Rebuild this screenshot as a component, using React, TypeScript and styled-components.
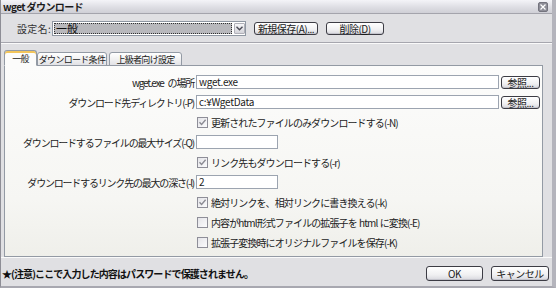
import React from "react";
import styled, { createGlobalStyle } from "styled-components";

const GlobalStyle = createGlobalStyle`
  body {
    margin: 0;
    background: #e0e0e3;
  }
  * {
    box-sizing: border-box;
  }
`;

const uiFont = `"Noto Sans CJK JP", "Noto Sans", sans-serif`;

const App: React.FC<{}> = () => {
  const checkRows = [
    { label: "絶対リンクを、相対リンクに書き換える(-k)", checked: true },
    { label: "内容がhtml形式ファイルの拡張子を html に変換(-E)", checked: false },
    { label: "拡張子変換時にオリジナルファイルを保存(-K)", checked: false },
  ];

  return (
    <>
      <GlobalStyle />
      <Window>
        <TitleBar>
          <TitleText>wget ダウンロード</TitleText>
          <CloseButton>
            <svg width="6" height="6" viewBox="0 0 6 6">
              <path d="M0.5 0.5 L5.5 5.5 M5.5 0.5 L0.5 5.5" stroke="#fff" strokeWidth="1.2" />
            </svg>
          </CloseButton>
        </TitleBar>

        <Toolbar>
          <ComboLabel>設定名:</ComboLabel>
          <Combo>
            <ComboValue>一般</ComboValue>
            <ComboArrow>
              <svg width="7" height="5" viewBox="0 0 7 5">
                <path d="M0.5 0.8 L3.5 3.8 L6.5 0.8" stroke="#4a4a55" strokeWidth="1.4" fill="none" />
              </svg>
            </ComboArrow>
          </Combo>
          <Button $width={64}>新規保存(<u>A</u>)...</Button>
          <Button $width={58}>削除(<u>D</u>)</Button>
        </Toolbar>

        <Separator />

        <TabArea>
          <TabStrip>
            <Tab $active $width={33}>一般</Tab>
            <Tab $width={70}>ダウンロード条件</Tab>
            <Tab $width={73}>上級者向け設定</Tab>
          </TabStrip>
          <Panel>
            <FieldLabel>wget.exe の場所</FieldLabel>
            <FieldWithButton>
              <TextBox>wget.exe</TextBox>
              <Button $width={39}>参照...</Button>
            </FieldWithButton>

            <FieldLabel>ダウンロード先ディレクトリ(-P)</FieldLabel>
            <FieldWithButton>
              <TextBox>c:¥WgetData</TextBox>
              <Button $width={39}>参照...</Button>
            </FieldWithButton>

            <Spacer />
            <CheckRow>
              <CheckBox $checked />
              <CheckText>更新されたファイルのみダウンロードする(-N)</CheckText>
            </CheckRow>

            <FieldLabel>ダウンロードするファイルの最大サイズ(-Q)</FieldLabel>
            <ShortBox />

            <Spacer />
            <CheckRow>
              <CheckBox $checked />
              <CheckText>リンク先もダウンロードする(-r)</CheckText>
            </CheckRow>

            <FieldLabel>ダウンロードするリンク先の最大の深さ(-l)</FieldLabel>
            <ShortBox>2</ShortBox>

            {checkRows.map((row, i) => (
              <React.Fragment key={i}>
                <Spacer />
                <CheckRow>
                  <CheckBox $checked={row.checked} />
                  <CheckText>{row.label}</CheckText>
                </CheckRow>
              </React.Fragment>
            ))}
          </Panel>
        </TabArea>

        <Footer>
          <Notice>★(注意)ここで入力した内容はパスワードで保護されません。</Notice>
          <FooterButtons>
            <Button $width={57} $height={15}>OK</Button>
            <Button $width={58} $height={15}>キャンセル</Button>
          </FooterButtons>
        </Footer>
      </Window>
    </>
  );
};

const CheckBox: React.FC<{ $checked?: boolean }> = ({ $checked }) => (
  <CheckFrame>
    {$checked && (
      <svg width="9" height="9" viewBox="0 0 9 9">
        <path d="M1.5 4.2 L3.6 6.4 L7.6 1.8" stroke="#8c8c94" strokeWidth="1.4" fill="none" />
      </svg>
    )}
  </CheckFrame>
);

const Window = styled.div`
  width: 556px;
  height: 288px;
  display: flex;
  flex-direction: column;
  background: #e0e0e3;
  border-left: 1px solid #8e8e96;
  border-right: 4px solid #b4b4bc;
  border-bottom: 2px solid #a8a8b0;
  font-family: ${uiFont};
  font-size: 10px;
  color: #111;
`;

const TitleBar = styled.div`
  height: 14px;
  flex: none;
  display: flex;
  align-items: center;
  justify-content: space-between;
  padding: 0 4px 0 2px;
  background: linear-gradient(#f4f4f8, #dcdce2 60%, #cfcfd6);
  border-bottom: 1px solid #a4a4ac;
`;

const TitleText = styled.span`
  font-weight: bold;
  font-size: 10px;
  letter-spacing: -0.6px;
  color: #1a1a1a;
`;

const CloseButton = styled.div`
  width: 10px;
  height: 10px;
  background: #8e8e98;
  border: 1px solid #74747e;
  border-radius: 2px;
  display: flex;
  align-items: center;
  justify-content: center;
`;

const Toolbar = styled.div`
  height: 28px;
  flex: none;
  display: flex;
  align-items: center;
  padding-left: 16px;
  gap: 8px;
`;

const ComboLabel = styled.span`
  font-size: 10px;
  letter-spacing: 0.3px;
  white-space: nowrap;
  color: #333;
  margin-right: -7px;
`;

const Combo = styled.div`
  width: 194px;
  height: 15px;
  display: flex;
  align-items: stretch;
  background: #fff;
  border: 1px solid #8f97a2;
`;

const ComboValue = styled.div`
  flex: 1;
  margin: 1px;
  background: #b8b8bc;
  outline: 1px dotted #303030;
  outline-offset: -1px;
  font-size: 11px;
  line-height: 11px;
  padding-left: 2px;
  color: #111;
`;

const ComboArrow = styled.div`
  width: 11px;
  margin: 1px 0 1px 1px;
  background: linear-gradient(#f6f6f8, #d4d4da);
  border: 1px solid #b0b0b8;
  border-radius: 1px;
  display: flex;
  align-items: center;
  justify-content: center;
`;

const Button = styled.div<{ $width: number; $height?: number }>`
  width: ${(p) => p.$width}px;
  height: ${(p) => p.$height || 13}px;
  flex: none;
  display: flex;
  align-items: center;
  justify-content: center;
  border: 1px solid #3c3c44;
  border-radius: 3px;
  background: linear-gradient(#ffffff, #f0f0f2 60%, #d8d8de);
  box-shadow: inset 0 -1px 0 #c4c4cc;
  font-size: 10px;
  letter-spacing: -0.5px;
  color: #1a1a1a;
  white-space: nowrap;

  u {
    text-decoration: underline;
  }
`;

const Separator = styled.div`
  height: 2px;
  flex: none;
  border-top: 1px solid #a6a6ae;
  border-bottom: 1px solid #fafafa;
`;

const TabArea = styled.div`
  flex: none;
  display: flex;
  flex-direction: column;
  padding: 6px 9px 0 3px;
`;

const TabStrip = styled.div`
  display: flex;
  align-items: flex-end;
  height: 16px;
  position: relative;
  z-index: 1;
  margin-bottom: -1px;
`;

const Tab = styled.div<{ $active?: boolean; $width: number }>`
  width: ${(p) => p.$width}px;
  height: ${(p) => (p.$active ? 16 : 14)}px;
  margin-right: ${(p) => (p.$active ? 0 : 2)}px;
  display: flex;
  align-items: center;
  justify-content: center;
  font-size: 9px;
  letter-spacing: -0.7px;
  white-space: nowrap;
  color: #222;
  border: 1px solid #939aa4;
  border-bottom: ${(p) => (p.$active ? "1px solid #fcfcfb" : "1px solid #939aa4")};
  border-radius: 3px 3px 0 0;
  background: ${(p) =>
    p.$active
      ? "#fcfcfb"
      : "linear-gradient(#ffffff, #f2f2f2 50%, #e2e2e6)"};
  box-shadow: ${(p) => (p.$active ? "inset 0 2px 0 #f3c55a" : "none")};
`;

const Panel = styled.div`
  height: 192px;
  display: grid;
  grid-template-columns: 189px 1fr;
  grid-auto-rows: 14px;
  column-gap: 2px;
  row-gap: 6px;
  align-content: start;
  padding: 9px 2px 0 0;
  border: 1px solid #939aa4;
  background: linear-gradient(#fcfcfb, #f6f6f3 70%, #efefea);
`;

const FieldLabel = styled.div`
  display: flex;
  align-items: center;
  justify-content: flex-end;
  font-size: 10px;
  letter-spacing: -1.2px;
  word-spacing: 3px;
  white-space: pre;
  color: #222;
`;

const FieldWithButton = styled.div`
  display: flex;
  align-items: center;
  gap: 2px;
`;

const TextBox = styled.div`
  flex: 1;
  height: 14px;
  background: #fff;
  border: 1px solid #9ca4b0;
  font-size: 10px;
  line-height: 12px;
  padding-left: 2px;
  letter-spacing: -0.3px;
  color: #222;
`;

const ShortBox = styled(TextBox)`
  flex: none;
  width: 82px;
`;

const Spacer = styled.div``;

const CheckRow = styled.div`
  display: flex;
  align-items: center;
  gap: 3px;
  padding-left: 1px;
`;

const CheckFrame = styled.span`
  width: 11px;
  height: 11px;
  flex: none;
  border: 1px solid #8e8e98;
  background: linear-gradient(135deg, #e4e4e8, #fbfbfc);
  display: flex;
  align-items: center;
  justify-content: center;
`;

const CheckText = styled.span`
  font-size: 10px;
  letter-spacing: -0.9px;
  word-spacing: 1px;
  white-space: pre;
  color: #222;
`;

const Footer = styled.div`
  flex: 1;
  display: flex;
  align-items: center;
  justify-content: space-between;
  padding: 2px 3px 0 1px;
  border-top: 1px solid #fafafa;
`;

const Notice = styled.span`
  font-weight: bold;
  font-size: 10px;
  letter-spacing: -0.9px;
  color: #111;
`;

const FooterButtons = styled.div`
  display: flex;
  gap: 8px;
`;

export default App;
